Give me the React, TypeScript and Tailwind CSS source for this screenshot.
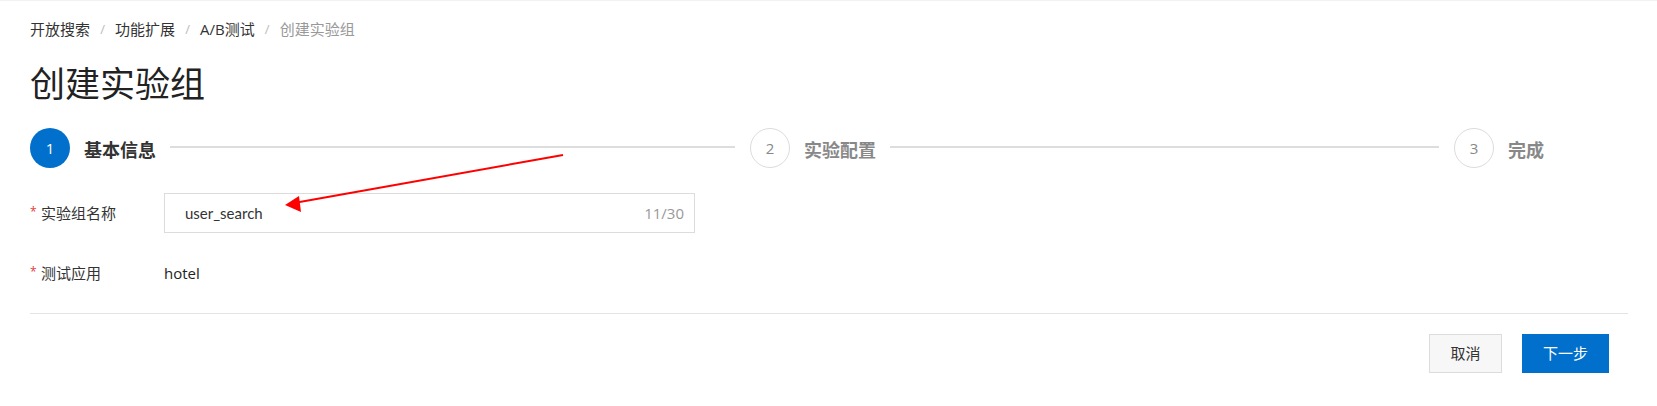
import React from "react";

const font = { fontFamily: '"Open Sans", "Noto Sans CJK SC", sans-serif' };

function Step({ n, title, active }: { n: number; title: string; active?: boolean }) {
  return (
    <>
      <div
        className={
          active
            ? "w-10 h-10 shrink-0 rounded-full bg-[#0070cc] text-white flex items-center justify-center text-[15px]"
            : "w-10 h-10 shrink-0 rounded-full border border-[#dcdcdc] bg-white text-[#888] flex items-center justify-center text-[15px]"
        }
      >
        {n}
      </div>
      <div
        className={
          "ml-[14px] mt-[10px] shrink-0 text-[18px] leading-[24px] font-bold " +
          (active ? "text-[#333]" : "text-[#888]")
        }
      >
        {title}
      </div>
    </>
  );
}

export default function App() {
  return (
    <div
      className="relative w-full h-[406px] bg-white border-t border-[#f2f2f2] pl-[30px] pr-[29px] text-[#333]"
      style={font}
    >
      {/* breadcrumb */}
      <div className="pt-[18px] flex items-center h-[38px] text-[15px] leading-[20px]">
        <span className="text-[#333]">开放搜索</span>
        <span className="w-[25px] text-center text-[#bbb] text-[13px]">/</span>
        <span className="text-[#333]">功能扩展</span>
        <span className="w-[25px] text-center text-[#bbb] text-[13px]">/</span>
        <span className="text-[#333]">A/B测试</span>
        <span className="w-[25px] text-center text-[#bbb] text-[13px]">/</span>
        <span className="text-[#999]">创建实验组</span>
      </div>

      {/* title */}
      <h1 className="mt-[23px] text-[35px] leading-[44px] font-normal text-[#222]">创建实验组</h1>

      {/* steps */}
      <div className="mt-[22px] flex items-start h-10">
        <Step n={1} title="基本信息" active />
        <div className="ml-[14px] mt-[18px] w-[565px] h-[2px] bg-[#dddddd] shrink-0" />
        <div className="ml-[15px] flex items-start">
          <Step n={2} title="实验配置" />
        </div>
        <div className="ml-[14px] mt-[18px] w-[549px] h-[2px] bg-[#dddddd] shrink-0" />
        <div className="ml-[15px] flex items-start">
          <Step n={3} title="完成" />
        </div>
      </div>

      {/* form row 1 */}
      <div className="mt-[25px] flex items-center h-10">
        <div className="w-[134px] shrink-0 flex items-center text-[15px]">
          <span className="w-[11px] text-[#e4393c] text-[12px] leading-none -mt-[3px]">*</span>
          <span className="text-[#333]">实验组名称</span>
        </div>
        <div className="w-[531px] h-10 border border-[#dcdcdc] flex items-center pl-[20px] pr-[10px]">
          <span className="flex-1 text-[15px] text-[#333] font-['Lato',sans-serif]">user_search</span>
          <span className="text-[15px] text-[#999]">11/30</span>
        </div>
      </div>

      {/* form row 2 */}
      <div className="mt-[30px] flex items-center h-5">
        <div className="w-[134px] shrink-0 flex items-center text-[15px]">
          <span className="w-[11px] text-[#e4393c] text-[12px] leading-none -mt-[3px]">*</span>
          <span className="text-[#333]">测试应用</span>
        </div>
        <span className="text-[15px] text-[#222]">hotel</span>
      </div>

      {/* divider */}
      <div className="mt-[30px] h-px bg-[#e3e3e3]" />

      {/* buttons */}
      <div className="mt-[20px] flex justify-end gap-[20px] pr-[19px]">
        <button className="w-[73px] h-[39px] border border-[#dcdcdc] bg-[#f7f7f7] text-[15px] text-[#333]">
          取消
        </button>
        <button className="w-[87px] h-[39px] bg-[#0070cc] text-[15px] text-white">下一步</button>
      </div>

      {/* annotation arrow */}
      <svg
        className="absolute left-0 top-0 pointer-events-none"
        width="1657"
        height="406"
        viewBox="0 0 1657 406"
      >
        <line x1="563" y1="154" x2="294" y2="202" stroke="#ff0000" strokeWidth="2" />
        <polygon points="285,204 299,195 301,211" fill="#ff0000" />
      </svg>
    </div>
  );
}
